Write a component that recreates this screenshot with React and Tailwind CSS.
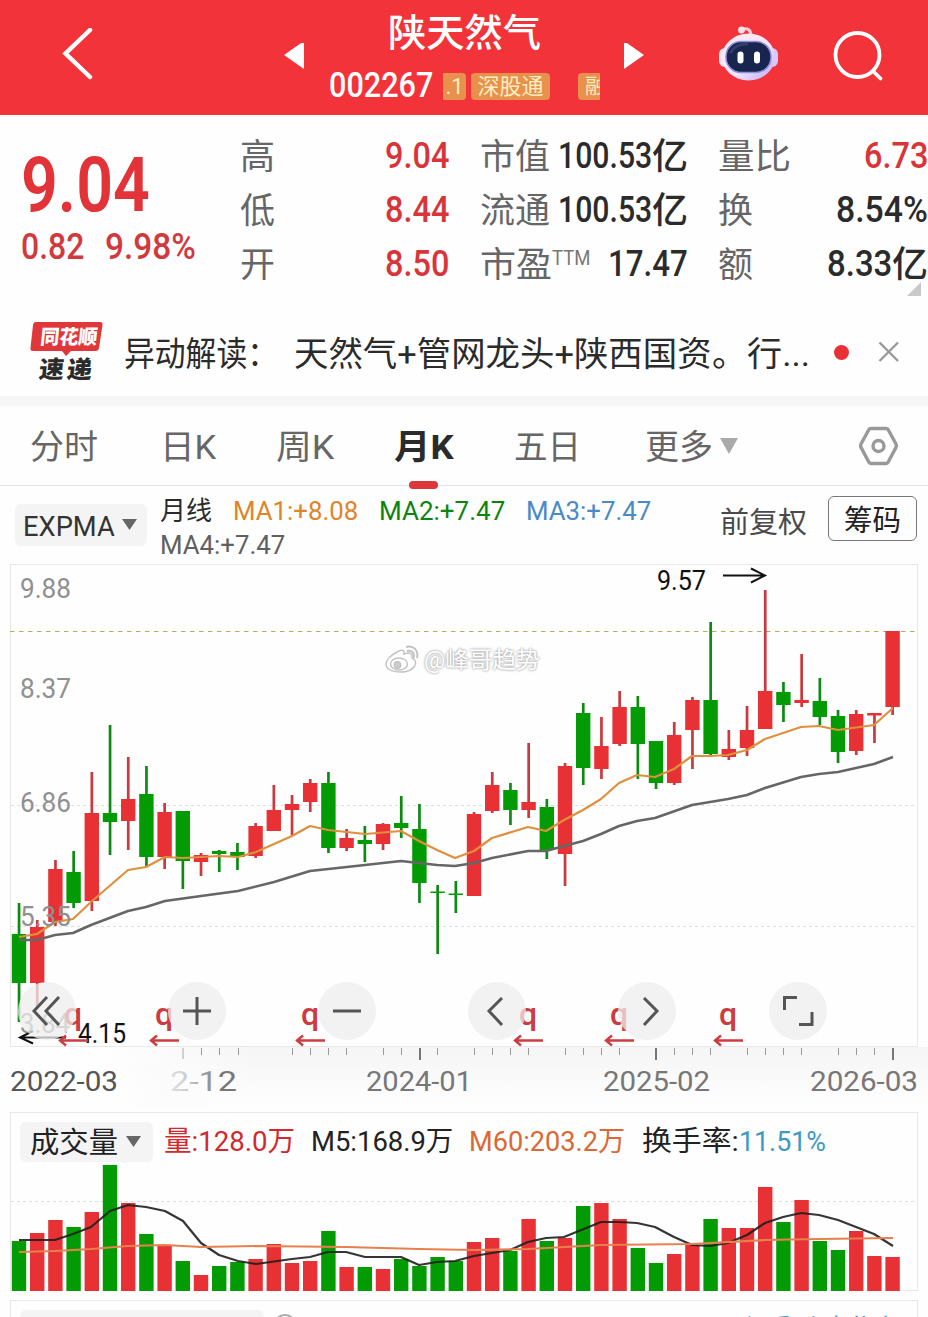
import { useLayoutEffect, useRef, useState } from "react";

// Condenses or widens a single line of text to the width given by its class.
function Fit({ className = "", children }) {
  const box = useRef(null);
  const text = useRef(null);
  const [scale, setScale] = useState(1);
  useLayoutEffect(() => {
    const natural = text.current.offsetWidth;
    if (natural) setScale(box.current.offsetWidth / natural);
  }, [children]);
  return (
    <span ref={box} className={"inline-block shrink-0 whitespace-nowrap " + className}>
      <span ref={text} className="inline-block origin-left" style={{ transform: `scaleX(${scale})` }}>
        {children}
      </span>
    </span>
  );
}

const RED = "#e83134";
const GREEN = "#039b03";
const X = (i) => 19 + 18.2 * i;

// [colour, high, body top, body bottom, low, volume top]
const candles = [
  ["g", 903, 934, 983, 1022, 1241], ["r", 920, 927, 983, 1008, 1233], ["r", 860, 869, 922, 926, 1220],
  ["g", 851, 872, 903, 908, 1227], ["r", 772, 813, 901, 911, 1212], ["g", 725, 813, 822, 855, 1165],
  ["r", 757, 799, 821, 850, 1203], ["g", 766, 794, 857, 867, 1234], ["r", 803, 812, 857, 869, 1245],
  ["g", 811, 811, 861, 889, 1261], ["r", 853, 855, 862, 876, 1275], ["g", 850, 851, 854, 872, 1266],
  ["g", 843, 852, 857, 870, 1262], ["r", 823, 826, 856, 858, 1259], ["r", 785, 810, 831, 831, 1244],
  ["r", 795, 804, 810, 835, 1263], ["r", 779, 783, 802, 812, 1261], ["g", 772, 783, 848, 853, 1231],
  ["r", 829, 838, 848, 851, 1267], ["g", 826, 840, 844, 862, 1267], ["r", 823, 824, 844, 850, 1269],
  ["g", 796, 823, 828, 838, 1259], ["g", 804, 829, 883, 903, 1266], ["g", 885, 891.5, 893, 954, 1257],
  ["g", 881, 893.5, 895, 913, 1261], ["r", 812, 814, 896, 896, 1242], ["r", 772, 785, 811, 813, 1238],
  ["g", 783, 790, 810, 825, 1251], ["r", 743, 802, 810, 818, 1219], ["g", 799, 807, 850, 859, 1241],
  ["r", 763, 766, 854, 886, 1238], ["g", 703, 713, 768, 785, 1206], ["r", 717, 746, 769, 779, 1203],
  ["r", 691, 707, 744, 746, 1219], ["g", 696, 707, 744, 779, 1248], ["g", 741, 741, 783, 789, 1263],
  ["r", 722, 735, 783, 785, 1254], ["r", 697, 700, 730, 769, 1245], ["g", 622, 700, 754, 755, 1219],
  ["r", 730, 749, 757, 760, 1228], ["r", 706, 730, 748, 756, 1228], ["r", 590, 691, 729, 729, 1187],
  ["g", 682, 692, 705, 722, 1222], ["r", 654, 700, 703, 707, 1200], ["g", 678, 701, 717, 725, 1241],
  ["g", 710, 716, 752, 763, 1250], ["r", 710, 714, 751, 755, 1231], ["r", 713, 713, 715.5, 743, 1256],
  ["r", 631, 631, 707, 715, 1257],
];

const fastLine =
  "19,937 37,934 55,922 73,919 91,902 128,870 146,867 165,857 183,858 219,856 238,857 256,852 292,836 310,826 328,830 365,834 401,831 419,841 437,850 455,858 474,851 492,838 528,827 546,831 564,820 583,810 601,799 619,783 637,775 655,777 674,769 692,756 710,756 728,755 747,750 765,739 801,727 819,726 838,730 874,725 893,708";
const slowLine =
  "19,940 37,940 55,935 73,933 91,925 128,911 146,907 165,901 201,896 238,891 274,882 310,871 365,865 401,861 437,865 455,866 474,863 492,858 528,851 546,851 564,846 583,841 601,834 619,826 637,821 655,818 692,805 728,799 747,795 765,788 801,777 819,774 838,772 874,764 893,757";
const m5Line =
  "19,1240 55,1240 73,1234 91,1227 110,1211 128,1205 146,1207 165,1211 183,1221 201,1243 219,1255 238,1261 256,1264 292,1259 310,1257 328,1252 346,1252 365,1257 401,1257 419,1265 437,1262 455,1261 474,1256 510,1250 528,1242 546,1238 564,1237 601,1222 619,1222 637,1223 655,1227 674,1237 692,1245 710,1246 728,1243 747,1235 765,1223 783,1217 801,1213 819,1215 838,1220 874,1234 893,1246";
const m60Line =
  "19,1252 55,1251 91,1249 128,1246 165,1245 201,1247 256,1246 346,1247 419,1249 474,1250 528,1249 601,1245 692,1244 765,1240 819,1239 893,1238";

const smallTicks = [201, 219, 238, 292, 310, 328, 346, 383, 401, 437, 474, 492, 510, 528, 565, 583, 601, 619, 674, 692, 710, 747, 765, 783, 801, 838, 856, 874];
const marks = [73, 164, 310, 528, 619, 728];

function Header() {
  return (
    <header className="flex h-[115px] items-center bg-[#f2333a] text-white">
      <svg className="ml-[58px] h-[60px] w-[40px]" viewBox="0 0 40 60" fill="none" stroke="#fff" strokeWidth="4.5" strokeLinecap="round">
        <path d="M32 2 7.5 25.500 32 49" />
      </svg>
      <svg className="ml-[185px] h-[30px] w-[21px]" viewBox="0 0 21 30" fill="#fff"><path d="M1 12 21 -2V26z" /></svg>
      <div className="ml-[25px] flex w-[272px] flex-col gap-[18px] self-stretch pt-[13px]">
        <div className="flex h-[40px] justify-center pr-[2px] text-[38px] leading-[40px]">
          <Fit className="w-[153px] font-medium">陕天然气</Fit>
        </div>
        <div className="flex h-[30px] items-center">
          <Fit className="w-[104px] text-[35px] leading-[30px] font-medium">002267</Fit>
          <span className="ml-[10px] flex h-[27px] w-[23px] items-center justify-center overflow-hidden rounded-r-sm bg-[#e8914d] text-[22px] leading-[27px] text-[#ffeec0]">.1</span>
          <span className="ml-[5px] flex h-[27px] w-[79px] items-center justify-center rounded-sm bg-[#e8914d]">
            <Fit className="w-[66px] text-[22px] leading-[27px] text-[#ffeec0]">深股通</Fit>
          </span>
          <span className="ml-[28px] flex h-[27px] w-[22px] items-center overflow-hidden rounded-l-sm bg-[#e8914d] pl-[7px] text-[21px] leading-[27px] text-[#ffeec0]">融</span>
        </div>
      </div>
      <svg className="ml-[23px] h-[30px] w-[21px]" viewBox="0 0 21 30" fill="#fff"><path d="M20 12 0 -2V26z" /></svg>
      <svg className="mb-[5px] ml-[73px] h-[60px] w-[62px]" viewBox="0 0 62 60">
        <defs>
          <linearGradient id="shell" x1="0" y1="0" x2="1" y2="1">
            <stop offset="0" stopColor="#ffeaf0" />
            <stop offset=".55" stopColor="#f6e6ff" />
            <stop offset="1" stopColor="#b9a9f5" />
          </linearGradient>
        </defs>
        <path d="M24 4q9-2 9 7" fill="none" stroke="#ffc9d3" strokeWidth="3" />
        <circle cx="23.500" cy="5" r="3.400" fill="#ffe3ea" />
        <rect x="1" y="23" width="12" height="19" rx="6" fill="#ffe3ee" />
        <rect x="48" y="23" width="12" height="19" rx="6" fill="#d9c9f8" />
        <ellipse cx="30.500" cy="32" rx="26.500" ry="23.500" fill="url(#shell)" />
        <rect x="8" y="16.500" width="45" height="31" rx="15" fill="#17254f" stroke="#8f8fe0" strokeWidth="1.500" />
        <path d="M13 27q4-8 16-8" stroke="#43507b" strokeWidth="3" fill="none" strokeLinecap="round" opacity=".6" />
        <rect x="19.500" y="26.500" width="6" height="12" rx="3" fill="#fff" />
        <rect x="36" y="26.500" width="6" height="12" rx="3" fill="#fff" />
      </svg>
      <svg className="mb-[2px] ml-[52px] h-[54px] w-[54px]" viewBox="0 0 54 54" fill="none" stroke="#fff" strokeWidth="3.800" strokeLinecap="round">
        <circle cx="25.500" cy="25" r="22" />
        <path d="m42 42 6.500 6.500" />
      </svg>
    </header>
  );
}

function Quote() {
  const label = "text-[#666] text-[35px] leading-[57px]";
  const num = "text-[36px] leading-[55px] font-medium";
  const unit = "w-[36px] text-[36px] leading-[57px] font-medium";
  return (
    <section className="relative flex h-[185px] pt-[14px]">
      <div className="w-[240px] pl-[21px] pt-[20px] text-[#e23338]">
        <Fit className="block w-[129px] text-[76px] leading-[72px] font-semibold">9.04</Fit>
        <div className="flex gap-[21px] pt-[8px] text-[36px] leading-[36px] text-[#d03a3f]">
          <Fit className="w-[63px] font-medium">0.82</Fit>
          <Fit className="w-[91px] font-medium">9.98%</Fit>
        </div>
      </div>
      <div className="grid w-[210px] auto-rows-[54px] grid-cols-[145px_64px]">
        <span className={label}>高</span><Fit className={"w-[64px] text-[#d8353a] " + num}>9.04</Fit>
        <span className={label}>低</span><Fit className={"w-[64px] text-[#d8353a] " + num}>8.44</Fit>
        <span className={label}>开</span><Fit className={"w-[64px] text-[#d8353a] " + num}>8.50</Fit>
      </div>
      <div className="ml-[30px] flex w-[208px] flex-col text-[#2b2b2b]">
        <div className="flex h-[54px] justify-between"><Fit className={"w-[70px] " + label}>市值</Fit><span className="flex"><Fit className={"w-[94px] " + num}>100.53</Fit><Fit className={unit}>亿</Fit></span></div>
        <div className="flex h-[54px] justify-between"><Fit className={"w-[70px] " + label}>流通</Fit><span className="flex"><Fit className={"w-[94px] " + num}>100.53</Fit><Fit className={unit}>亿</Fit></span></div>
        <div className="flex h-[54px]"><Fit className={"w-[72px] " + label}>市盈</Fit><Fit className="w-[38px] text-[20px] leading-[42px] text-[#777]">TTM</Fit><Fit className={"ml-[18px] w-[80px] " + num}>17.47</Fit></div>
      </div>
      <div className="ml-[30px] flex w-[210px] flex-col text-[#2b2b2b]">
        <div className="flex h-[54px] justify-between"><Fit className={"w-[73px] " + label}>量比</Fit><Fit className={"w-[64px] text-[#d8353a] " + num}>6.73</Fit></div>
        <div className="flex h-[54px] justify-between"><span className={label}>换</span><Fit className={"w-[92px] " + num}>8.54%</Fit></div>
        <div className="flex h-[54px] justify-between"><span className={label}>额</span><span className="flex"><Fit className={"w-[65px] " + num}>8.33</Fit><Fit className={unit}>亿</Fit></span></div>
      </div>
      <svg className="absolute right-[7px] bottom-[4px] h-[14px] w-[14px]" viewBox="0 0 14 14"><path d="M14 0V14H0z" fill="#c9c9c9" /></svg>
    </section>
  );
}

function News() {
  return (
    <section className="flex h-[106px] items-center border-b-[10px] border-[#f6f6f6] pt-[8px] text-[#2b2b2b]">
      <div className="relative ml-[30px] h-[64px] w-[74px]">
        <svg className="absolute inset-0 h-[64px] w-[74px]" viewBox="0 0 74 64"><path d="M6 2H70q3 0 2.500 3L69 28q-.5 3-3.500 3H41l-5 5-4-5H3q-3 0-2.500-3L3 5q.5-3 3-3z" fill="#e0373b" /></svg>
        <div className="relative flex -skew-x-6 flex-col items-center">
          <Fit className="mt-[3px] w-[57px] text-[20px] leading-[29px] font-black text-white">同花顺</Fit>
          <span className="mt-[5px] flex gap-[3px] text-[24px] leading-[27px] font-black"><Fit className="w-[25px]">速</Fit><Fit className="w-[25px]">递</Fit></span>
        </div>
      </div>
      <Fit className="ml-[20px] w-[154px] pt-[3px] text-[34px] leading-[50px]">异动解读：</Fit>
      <Fit className="ml-[16px] w-[418px] pt-[3px] text-[34px] leading-[50px]">天然气+管网龙头+陕西国资</Fit>
      <Fit className="w-[98px] pt-[3px] text-[34px] leading-[50px]">。行...</Fit>
      <span className="ml-[24px] h-[15px] w-[15px] rounded-full bg-[#e83134]" />
      <svg className="ml-[29px] h-[22px] w-[22px]" viewBox="0 0 22 22" stroke="#999" strokeWidth="2.400"><path d="M1.500 1.500 20 20M20 1.500 1.500 20" /></svg>
    </section>
  );
}

function Tabs() {
  return (
    <nav className="flex h-[80px] items-center border-b border-[#e6e6e6] text-[34px] leading-[52px] text-[#666]">
      <Fit className="mt-[2px] ml-[30px] w-[68px]">分时</Fit>
      <Fit className="mt-[2px] ml-[62px] w-[56px]">日K</Fit>
      <Fit className="mt-[2px] ml-[60px] w-[58px]">周K</Fit>
      <span className="relative mt-[2px] ml-[60px] flex font-bold text-[#2b2b2b]">
        <Fit className="w-[60px]">月K</Fit>
        <span className="absolute top-[60px] left-[15px] h-[8px] w-[29px] rounded-full bg-[#dd373b]" />
      </span>
      <Fit className="mt-[2px] ml-[60px] w-[67px]">五日</Fit>
      <Fit className="mt-[2px] ml-[64px] w-[68px]">更多</Fit>
      <svg className="ml-[7px] h-[16px] w-[18px]" viewBox="0 0 18 16" fill="#aaa"><path d="M0 0H18L9 16z" /></svg>
      <svg className="ml-[120px] h-[40px] w-[41px]" viewBox="0 0 41 40" fill="none" stroke="#999" strokeWidth="3.400" strokeLinejoin="round">
        <path d="M13 2.500H28q1.500 0 2.200 1.200L38 18q.8 1.700 0 3.400L30.200 36Q29.500 37.500 28 37.500H13q-1.500 0-2.200-1.500L3 21.400q-.8-1.700 0-3.400l7.800-14.300Q11.500 2.500 13 2.500z" />
        <circle cx="20.500" cy="20" r="5.500" />
      </svg>
    </nav>
  );
}

function Caret() {
  return <svg className="h-[12px] w-[15px]" viewBox="0 0 15 12" fill="#666"><path d="M0 0H15L7.500 11z" /></svg>;
}

function IndicatorBar() {
  return (
    <div className="flex h-[78px] text-[26px] leading-[34px]">
      <div className="mt-[18px] ml-[15px] flex h-[42px] w-[132px] items-center rounded-md bg-[#f4f4f4] pl-[8px]">
        <Fit className="w-[92px] pt-[3px] text-[27px] text-[#333]">EXPMA</Fit>
        <span className="ml-[7px] flex"><Caret /></span>
      </div>
      <div className="ml-[13px] flex w-[560px] flex-col pt-[8px]">
        <div className="flex">
          <Fit className="w-[52px] text-[#2b2b2b]">月线</Fit>
          <Fit className="ml-[21px] w-[125px] text-[#e08428]">MA1:+8.08</Fit>
          <Fit className="ml-[21px] w-[126px] text-[#0c850f]">MA2:+7.47</Fit>
          <Fit className="ml-[21px] w-[125px] text-[#4a8ac6]">MA3:+7.47</Fit>
        </div>
        <Fit className="w-[125px] text-[#606060]">MA4:+7.47</Fit>
      </div>
      <Fit className="mt-[18px] w-[87px] text-[29px] leading-[38px] text-[#4a4a4a]">前复权</Fit>
      <button className="mt-[10px] ml-[21px] flex h-[45px] w-[89px] items-center justify-center rounded-md border border-[#777] pt-[5px]">
        <Fit className="w-[57px] text-[29px] leading-[38px] text-[#222]">筹码</Fit>
      </button>
    </div>
  );
}

function ChartText({ x, y, w, children, fill, size = 27 }) {
  return (
    <text x={x} y={y} textLength={w} lengthAdjust="spacingAndGlyphs" fill={fill} fontSize={size}>
      {children}
    </text>
  );
}

function RoundButton({ className, children }) {
  return (
    <button className={"absolute top-[418px] flex h-[58px] w-[58px] items-center justify-center rounded-full bg-[#ededed]/75 " + className}>
      <svg className="h-[58px] w-[58px]" viewBox="0 0 58 58" fill="none" stroke="#555" strokeWidth="3">{children}</svg>
    </button>
  );
}

function PriceChart() {
  return (
    <section className="relative h-[548px] w-[928px]">
      <svg className="block h-[548px] w-[928px]" viewBox="0 564 928 548">
        <defs>
          <linearGradient id="axis" x1="0" y1="0" x2="0" y2="1">
            <stop offset="0" stopColor="#f5f5f5" />
            <stop offset="1" stopColor="#fefefe" />
          </linearGradient>
          <linearGradient id="axisEdge" x1="0" y1="0" x2="1" y2="0">
            <stop offset="0" stopColor="#fefefe" />
            <stop offset="1" stopColor="#fefefe" stopOpacity="0" />
          </linearGradient>
          <linearGradient id="fade" x1="0" y1="0" x2="1" y2="0">
            <stop offset="0" stopColor="#fbfbfb" stopOpacity="0" />
            <stop offset=".4" stopColor="#fbfbfb" stopOpacity=".85" />
            <stop offset=".6" stopColor="#fbfbfb" stopOpacity=".7" />
            <stop offset="1" stopColor="#fbfbfb" stopOpacity="0" />
          </linearGradient>
        </defs>
        <rect x="100" y="1047" width="828" height="60" fill="url(#axis)" />
        <rect x="99" y="1047" width="160" height="61" fill="url(#axisEdge)" />
        <rect x="10.500" y="564.500" width="907" height="482" fill="none" stroke="#e8e8e8" />
        <path d="M11 805.500H917M11 926.500H917" stroke="#dedede" strokeDasharray="3 3" />
        <path d="M10 631.500H917" stroke="#b3ae5c" strokeDasharray="4.500 4.500" />
        {candles.map(([c, high, top, bottom, low], i) => (
          <g key={i} fill={c === "r" ? RED : GREEN}>
            <rect x={X(i) - 1.3} y={high} width="2.700" height={low - high} fill={c === "r" ? "#c9393e" : "#0d8a12"} />
            <rect x={X(i) - 7.2} y={top} width="14.400" height={bottom - top} />
          </g>
        ))}
        <polyline points={slowLine} fill="none" stroke="#666" strokeWidth="2.600" strokeLinejoin="round" />
        <polyline points={fastLine} fill="none" stroke="#e08f3c" strokeWidth="2.200" strokeLinejoin="round" />
        <ChartText x={20} y={598} w={51} fill="#909090">9.88</ChartText>
        <ChartText x={20} y={698} w={51} fill="#909090">8.37</ChartText>
        <ChartText x={20} y={812} w={51} fill="#909090">6.86</ChartText>
        <ChartText x={20} y={926} w={51} fill="#909090">5.35</ChartText>
        <ChartText x={20} y={1033} w={50} fill="#909090">3.84</ChartText>
        <ChartText x={657} y={590} w={49} fill="#111">9.57</ChartText>
        <path d="M723 575.500H764M751 568.500 765 575.500 751 582.500" fill="none" stroke="#111" strokeWidth="2" />
        <path d="M66 1037.500H20M33 1031 20 1037.500 33 1043.500" fill="none" stroke="#111" strokeWidth="2" />
        <ChartText x={78} y={1043} w={48} fill="#111">4.15</ChartText>
        {marks.map((x) => (
          <g key={x}>
            <text x={x - 9} y={1025} fill="#cc3c40" fontSize="32" fontWeight="500">q</text>
            <path d={`M${x + 15} 1040.500H${x - 13}M${x - 7} 1035.500l-6 5 6 5`} fill="none" stroke="#cc3c40" strokeWidth="2.400" />
          </g>
        ))}
        {smallTicks.map((x) => <path key={x} d={`M${x + 0.5} 1048v7`} stroke="#999" />)}
        <path d="M183 1048v11" stroke="#d0d0d0" strokeWidth="2" />
        <path d="M420 1048v12M656 1048v12M893 1048v12" stroke="#777" strokeWidth="2" />
        <ChartText x={10} y={1091} w={108} fill="#555" size={28}>2022-03</ChartText>
        <ChartText x={170} y={1091} w={67} fill="#777" size={28}>2-12</ChartText>
        <rect x="124" y="1064" width="98" height="44" fill="url(#fade)" />
        <ChartText x={366} y={1091} w={106} fill="#777" size={28}>2024-01</ChartText>
        <ChartText x={603} y={1091} w={107} fill="#777" size={28}>2025-02</ChartText>
        <ChartText x={810} y={1091} w={108} fill="#777" size={28}>2026-03</ChartText>
      </svg>
      <div className="absolute top-[79px] left-[385px] flex items-center">
        <svg className="h-[32px] w-[36px]" viewBox="0 0 36 32" fill="#fff" stroke="#c2c2c2" strokeWidth="1.400">
          <path d="M12 7c4-3 8-2 7 2 5-2 9-1 8 4 8 4 2 14-11 14C5 27 1 23 1 19c0-4 5-9 11-12z" />
          <ellipse cx="14" cy="19" rx="8.500" ry="6" />
          <circle cx="12.500" cy="20" r="3.200" fill="#ccc" />
          <path d="M21 2c8-2 13 4 11 11M22 6c5-1 8 2 6.500 7" fill="none" strokeWidth="2" />
        </svg>
        <Fit className="ml-[3px] w-[116px] pt-[1px] text-[23px] leading-[34px] text-white [text-shadow:0_0_2px_#aaa,0_0_3px_#aaa]">@峰哥趋势</Fit>
      </div>
      <RoundButton className="left-[18px]"><path d="M29 15 16 29 29 43M41 15 28 29 41 43" /></RoundButton>
      <RoundButton className="left-[168px]"><path d="M15 29H43M29 15V43" /></RoundButton>
      <RoundButton className="left-[318px]"><path d="M15 29H43" /></RoundButton>
      <RoundButton className="left-[468px]"><path d="M34 16 21 29 34 43" /></RoundButton>
      <RoundButton className="left-[618px]"><path d="M26 16 39 29 26 43" /></RoundButton>
      <RoundButton className="left-[769px]"><path d="M15.500 28V15.500H28M43 30V42.500H30" /></RoundButton>
    </section>
  );
}

function VolumePanel() {
  return (
    <section className="mx-[10px] h-[179px] w-[908px] border border-b-0 border-[#e8e8e8]">
      <div className="flex h-[52px] items-center pt-[5px] pl-[9px] text-[28px] leading-[40px]">
        <div className="flex h-[40px] w-[133px] items-center rounded-md bg-[#f4f4f4] pl-[10px]">
          <Fit className="w-[88px] pt-[2px] text-[29px] text-[#222]">成交量</Fit>
          <span className="ml-[8px] flex"><Caret /></span>
        </div>
        <Fit className="ml-[11px] w-[131px] pt-[1px] text-[#d2282e]">量:128.0万</Fit>
        <Fit className="ml-[16px] w-[142px] pt-[1px] text-[#222]">M5:168.9万</Fit>
        <Fit className="ml-[16px] w-[156px] pt-[1px] text-[#da6935]">M60:203.2万</Fit>
        <Fit className="ml-[17px] w-[97px] pt-[1px] text-[#222]">换手率:</Fit>
        <Fit className="w-[87px] pt-[1px] text-[#3d9ac6]">11.51%</Fit>
      </div>
      <svg className="-ml-px block h-[127px] w-[908px]" viewBox="10 1165 908 127">
        <path d="M11 1201.500H917" stroke="#dedede" strokeDasharray="3 3" />
        <path d="M900 1290.500H917" stroke="#e8e8e8" />
        {candles.map((c, i) => (
          <rect key={i} x={X(i) - 7.2} y={c[5]} width="14.400" height={1291 - c[5]} fill={c[0] === "r" ? RED : GREEN} />
        ))}
        <polyline points={m5Line} fill="none" stroke="#1f1f1f" strokeOpacity=".9" strokeWidth="2.200" strokeLinejoin="round" />
        <polyline points={m60Line} fill="none" stroke="#e6814f" strokeWidth="2.200" strokeLinejoin="round" />
      </svg>
    </section>
  );
}

function NextPanel() {
  return (
    <section className="mx-[10px] mt-[9px] flex h-[17px] items-start overflow-hidden border border-b-0 border-[#e8e8e8] pl-[9px]">
      <span className="mt-[9px] h-[40px] w-[244px] rounded-md bg-[#f4f4f4]" />
      <span className="mt-[13px] ml-[9px] h-[24px] w-[24px] rounded-full border-2 border-[#aaa]" />
      <Fit className="mt-[10px] ml-[440px] w-[170px] text-[28px] leading-[40px] text-[#4f95cb]">主季动态指标</Fit>
    </section>
  );
}

export default function App() {
  return (
    <div className="flex h-[1317px] w-[928px] flex-col overflow-hidden bg-[#fefefe] font-[Roboto,'Noto_Sans_CJK_SC',sans-serif]">
      <Header />
      <Quote />
      <News />
      <Tabs />
      <IndicatorBar />
      <PriceChart />
      <VolumePanel />
      <NextPanel />
    </div>
  );
}
